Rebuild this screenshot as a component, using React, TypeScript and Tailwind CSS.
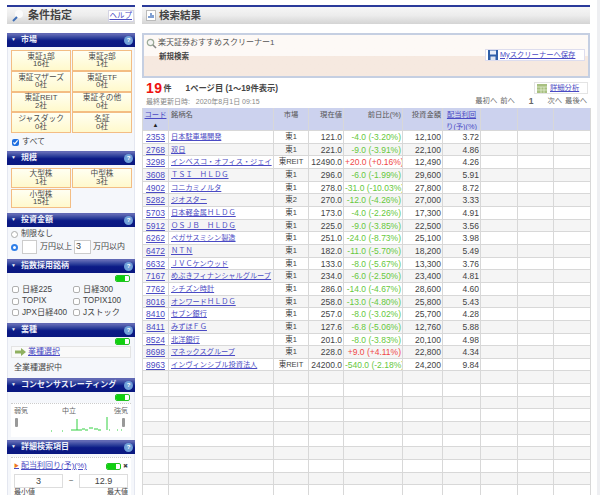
import React from "react";

const FONT = "font-['Liberation_Sans','Noto_Sans_CJK_JP',sans-serif]";

const rows: [string, string, string, string, string, string, string][] = [
  ["2353", "日本駐車場開発", "東1", "121.0", "-4.0 (-3.20%)", "12,100", "3.72"],
  ["2768", "双日", "東1", "221.0", "-9.0 (-3.91%)", "22,100", "4.86"],
  ["3298", "インベスコ・オフィス・ジェイ", "東REIT", "12490.0", "+20.0 (+0.16%)", "12,490", "4.26"],
  ["3608", "ＴＳＩ　ＨＬＤＧ", "東1", "296.0", "-6.0 (-1.99%)", "29,600", "5.91"],
  ["4902", "コニカミノルタ", "東1", "278.0", "-31.0 (-10.03%)", "27,800", "8.72"],
  ["5282", "ジオスター", "東2", "270.0", "-12.0 (-4.26%)", "27,000", "3.33"],
  ["5703", "日本軽金属ＨＬＤＧ", "東1", "173.0", "-4.0 (-2.26%)", "17,300", "4.91"],
  ["5912", "ＯＳＪＢ　ＨＬＤＧ", "東1", "225.0", "-9.0 (-3.85%)", "22,500", "3.56"],
  ["6262", "ペガサスミシン製造", "東1", "251.0", "-24.0 (-8.73%)", "25,100", "3.98"],
  ["6472", "ＮＴＮ", "東1", "182.0", "-11.0 (-5.70%)", "18,200", "5.49"],
  ["6632", "ＪＶＣケンウッド", "東1", "133.0", "-8.0 (-5.67%)", "13,300", "3.76"],
  ["7167", "めぶきフィナンシャルグループ", "東1", "234.0", "-6.0 (-2.50%)", "23,400", "4.81"],
  ["7762", "シチズン時計", "東1", "286.0", "-14.0 (-4.67%)", "28,600", "4.60"],
  ["8016", "オンワードＨＬＤＧ", "東1", "258.0", "-13.0 (-4.80%)", "25,800", "5.43"],
  ["8410", "セブン銀行", "東1", "257.0", "-8.0 (-3.02%)", "25,700", "4.28"],
  ["8411", "みずほＦＧ", "東1", "127.6", "-6.8 (-5.06%)", "12,760", "5.88"],
  ["8524", "北洋銀行", "東1", "201.0", "-8.0 (-3.83%)", "20,100", "4.98"],
  ["8698", "マネックスグループ", "東1", "228.0", "+9.0 (+4.11%)", "22,800", "4.34"],
  ["8963", "インヴィンシブル投資法人", "東REIT", "24200.0", "-540.0 (-2.18%)", "24,200", "9.84"],
];

const COLS = "grid grid-cols-[26px_105px_35px_35px_59px_40px_38px_37px_36px_37px]";
const CELL = "border-r border-b border-[#d8d8d8] px-[1px] overflow-hidden leading-[12px]";
const LINK = "text-[#4a4ac4]";

function Toggle() {
  return (
    <span className="flex h-[7px] w-[15px] overflow-hidden rounded-[2px] border border-[#22c322] bg-white">
      <span className="w-[9px] bg-[#10d010]" />
    </span>
  );
}

function Header({ title }: { title: string }) {
  return (
    <div className="flex h-[14px] items-center justify-between bg-gradient-to-b from-[#6068b4] from-[10%] via-[#0c1a86] via-[55%] to-[#0a1880] pl-[4px] pr-[2px] text-[8px] font-bold text-[#eef0fa]">
      <span className="flex items-center whitespace-nowrap">
        <span className="w-[10px] text-[5px]">▼</span>
        <span>{title}</span>
      </span>
      <span className="flex h-[9px] w-[9px] items-center justify-center rounded-full bg-[#6f9fd8] text-[6px] text-white">?</span>
    </div>
  );
}

function StockBtn({ a, b, small }: { a: string; b: string; small?: boolean }) {
  return (
    <div className={`flex ${small ? "h-[19.5px]" : "h-[20.75px]"} flex-col items-center justify-center border-[1.5px] border-[#f3bd84] bg-gradient-to-b from-[#fffff2] to-[#fff9cc] text-center text-[7.7px] leading-[7.5px] text-[#4a4a4a]`}>
      <span>{a}</span>
      <span>{b}</span>
    </div>
  );
}

function Check({ label }: { label: string }) {
  return (
    <div className="flex h-[11.5px] items-center gap-[3px] whitespace-nowrap">
      <span className="h-[7px] w-[7px] rounded-[2px] border border-[#b0b0b0] bg-white" />
      <span>{label}</span>
    </div>
  );
}

function Sidebar() {
  return (
    <div className="w-[128px] shrink-0 text-[8px] text-[#444]">
      <div className="flex h-[19px] items-center justify-between border-t-2 border-[#2a3a9a] bg-gradient-to-b from-[#f6f6f6] via-[#ececec] to-[#d4d4d4] pl-[4px] pr-[1px]">
        <div className="flex items-center gap-[3px]">
          <svg width="14" height="14" viewBox="0 0 14 14">
            <circle cx="8" cy="5" r="4" fill="#fbfbfb" />
            <path d="M2 12 L6 8" stroke="#3d6db5" strokeWidth="2" />
          </svg>
          <span className="text-[11px] font-bold text-[#444]">条件指定</span>
        </div>
        <span className="border border-[#d4d4e4] bg-white px-[1px] text-[7.5px] leading-[10px] text-[#4a4ac4] underline">ヘルプ</span>
      </div>

      <div className="mt-[9px] bg-[#f5f7fb]">
        <Header title="市場" />
        <div className="border-x border-[#e4e7f0] px-[3px] pt-[3px]">
          <div className="grid grid-cols-[60px_60px] gap-x-[1px] gap-y-0">
            <StockBtn a="東証1部" b="16社" />
            <StockBtn a="東証2部" b="1社" />
            <StockBtn a="東証マザーズ" b="0社" />
            <StockBtn a="東証ETF" b="0社" />
            <StockBtn a="東証REIT" b="2社" />
            <StockBtn a="東証その他" b="0社" />
            <StockBtn a="ジャスダック" b="0社" />
            <StockBtn a="名証" b="0社" />
          </div>
          <div className="flex h-[18px] items-center gap-[3px] pl-[1px]">
            <input type="checkbox" defaultChecked className="h-[7px] w-[7px] accent-[#1f6fe0]" />
            <span>すべて</span>
          </div>
        </div>

        <Header title="規模" />
        <div className="border-x border-[#e4e7f0] px-[3px] pb-[5px] pt-[3px]">
          <div className="grid grid-cols-[60px_60px] gap-x-[1px] gap-y-[1px]">
            <StockBtn small a="大型株" b="1社" />
            <StockBtn small a="中型株" b="3社" />
            <StockBtn small a="小型株" b="15社" />
          </div>
        </div>

        <Header title="投資金額" />
        <div className="flex h-[32px] flex-col gap-[1px] border-x border-[#e4e7f0] px-[3px] pt-[2px]">
          <div className="flex h-[10px] items-center gap-[3px]">
            <span className="h-[7px] w-[7px] rounded-full border border-[#aaa] bg-white" />
            <span>制限なし</span>
          </div>
          <div className="flex items-center whitespace-nowrap">
            <span className="h-[7px] w-[7px] rounded-full border-[2px] border-[#2f7fe8] bg-white" />
            <span className="ml-[4px] h-[14px] w-[15px] border border-[#ccc] bg-white" />
            <span className="ml-[3px] w-[34px]">万円以上</span>
            <span className="flex h-[14px] w-[17px] items-center border border-[#ccc] bg-white pl-[1px] text-[9px]">3</span>
            <span className="ml-[2px]">万円以内</span>
          </div>
        </div>

        <Header title="指数採用銘柄" />
        <div className="h-[50px] border-x border-[#e4e7f0] pl-[3px] pr-[3px] pt-[2px]">
          <div className="flex justify-end pr-[1px]"><Toggle /></div>
          <div className="mt-[2px] grid grid-cols-[61px_1fr] pl-[1px] text-[8.2px]">
            <Check label="日経225" />
            <Check label="日経300" />
            <Check label="TOPIX" />
            <Check label="TOPIX100" />
            <Check label="JPX日経400" />
            <Check label="Jストック" />
          </div>
        </div>

        <Header title="業種" />
        <div className="border-x border-[#e4e7f0] px-[3px] pt-[1px]">
          <div className="flex justify-end pr-[1px]"><Toggle /></div>
          <div className="mt-[1px] flex h-[12px] items-center gap-[2px] border border-[#e4e4e4] bg-[#fafafa] pl-[3px]">
            <svg width="11" height="8" viewBox="0 0 11 8">
              <path d="M0 2.5 H6 V0 L11 4 L6 8 V5.5 H0 Z" fill="#8fb060" />
            </svg>
            <span className={`${LINK} underline`}>業種選択</span>
          </div>
          <div className="flex h-[20px] items-center pl-[3px]">全業種選択中</div>
        </div>

        <Header title="コンセンサスレーティング" />
        <div className="border-x border-[#e4e7f0] px-[3px] pb-[3px] pt-[2px]">
          <div className="flex justify-end pr-[1px]"><Toggle /></div>
          <div className="mt-[2px] h-[34px] border-t border-dotted border-[#ccc] bg-white px-[3px] text-[7px] text-[#666]">
            <div className="flex justify-between pt-[1px] leading-[11px]">
              <span>弱気</span><span className="mr-[4px]">中立</span><span>強気</span>
            </div>
            <svg width="114" height="20" viewBox="0 0 114 20" className="block">
              <rect x="1" y="2" width="3" height="9" rx="1" fill="#999" />
              <rect x="108" y="2" width="3" height="9" rx="1" fill="#999" />
              <path d="M37 15h1M48 15h1M57 14h6M63 3v11M63 14h5M68 13h3M71 14h3M75 12h4M80 13h4M84 14h3M95 14h1M103 14h1M107 14h1" stroke="#33d040" strokeWidth="1" fill="none" />
              <path d="M93 1v13" stroke="#33d040" strokeWidth="1" />
            </svg>
          </div>
        </div>

        <Header title="詳細検索項目" />
        <div className="border-x border-[#e4e7f0] px-[3px] pt-[3px]">
          <div className="border-t border-dotted border-[#ccc] bg-white px-[3px] pt-[2px]">
            <div className="flex h-[12px] items-center justify-between">
              <span className={`flex items-center gap-[2px] ${LINK} underline`}>
                <span className="text-[5px] text-[#ee7722]">▶</span>配当利回り(予)(%)
              </span>
              <span className="flex items-center gap-[2px]"><Toggle /><span className="text-[6px]">✖</span></span>
            </div>
            <div className="mt-[2px] flex items-center justify-between">
              <span className="h-[14px] w-[49px] border border-[#ddd] text-center text-[9px] leading-[12px]">3</span>
              <span>~</span>
              <span className="h-[14px] w-[49px] border border-[#ddd] text-center text-[9px] leading-[12px]">12.9</span>
            </div>
            <div className="flex justify-between text-[7px] leading-[8px]">
              <span>最小値</span><span>最大値</span>
            </div>
          </div>
        </div>
      </div>
    </div>
  );
}

function Main() {
  return (
    <div className="w-[448px] shrink-0 text-[8.5px] text-[#444]">
      <div className="flex h-[19px] items-center gap-[3px] border-t-2 border-[#2a3a9a] bg-gradient-to-b from-[#f6f6f6] via-[#ececec] to-[#d4d4d4] pl-[4px]">
        <svg width="10" height="11" viewBox="0 0 10 11">
          <rect x="0.5" y="0.5" width="9" height="10" fill="#fff" stroke="#bbb" />
          <path d="M3 8V6M5 8V3M7 8V5" stroke="#4a78c0" strokeWidth="1.4" />
        </svg>
        <span className="text-[10.5px] font-bold">検索結果</span>
      </div>

      <div className="mt-[9px] h-[45px] border-2 border-[#c5cfe2] bg-gradient-to-b from-[#fdf9f6] from-[50%] to-[#f6e9e0] to-[50%]">
        <div className="flex h-[16px] items-center gap-[1px] pl-[2px] text-[8px] text-[#555]">
          <svg width="11" height="11" viewBox="0 0 11 11">
            <circle cx="4.5" cy="4.5" r="3.2" fill="#f5f5f5" stroke="#9aaa98" strokeWidth="1.2" />
            <path d="M7 7L10 10" stroke="#888" strokeWidth="1.6" />
          </svg>
          <span>楽天証券おすすめスクリーナー1</span>
        </div>
        <div className="flex items-start justify-between">
          <span className="pl-[15px] text-[7.5px] font-bold leading-[12px]">新規検索</span>
          <span className={`-mt-[2px] mr-[3px] flex h-[12px] w-[100px] items-center gap-[2px] whitespace-nowrap border border-[#dde] bg-white pl-[2px] text-[7.3px] ${LINK} underline`}>
            <svg width="10" height="10" viewBox="0 0 10 10" className="shrink-0">
              <rect width="10" height="10" fill="#2f5fa8" />
              <rect x="2" y="0.5" width="6" height="4" fill="#e8eef8" />
              <rect x="2.5" y="6.5" width="5" height="3.5" fill="#dfe6f0" />
            </svg>
            Myスクリーナーへ保存
          </span>
        </div>
      </div>

      <div className="mt-[1px] flex h-[29px] items-start justify-between">
        <div className="pl-[4px]">
          <div className="flex h-[17px] items-center">
            <span className="text-[14px] font-bold leading-[14px] tracking-[0.5px] text-[#ee1111]">19</span>
            <span className="ml-[1px] mt-[3px] text-[8px] font-bold">件</span>
            <span className="ml-[14px] mt-[2px] text-[8.3px] font-bold">1ページ目 (1～19件表示)</span>
          </div>
          <div className="mt-[1px] text-[7px] leading-[9px] text-[#888]">最終更新日時:&nbsp;&nbsp;&nbsp;2020年8月1日 09:15</div>
        </div>
        <div className="flex flex-col items-end">
          <span className={`mr-[2px] mt-[3px] flex h-[12px] w-[54px] items-center gap-[3px] border border-[#e4e4e4] pl-[2px] text-[7.3px] ${LINK} underline`}>
            <svg width="10" height="9" viewBox="0 0 10 9" className="shrink-0">
              <rect width="10" height="9" fill="#a8c080" />
              <path d="M0 3H10M0 6H10M4 3V9M7 3V9" stroke="#e8f0d8" strokeWidth="0.7" />
            </svg>
            詳細分析
          </span>
          <div className="mr-[3px] mt-[2px] flex text-[7.3px] leading-[10px] text-[#666]">
            <span>最初へ</span><span className="ml-[3px]">前へ</span>
            <span className="ml-[14px] mr-[14px] text-[8.5px] font-bold">1</span>
            <span>次へ</span><span className="ml-[3px]">最後へ</span>
          </div>
        </div>
      </div>

      <div className="border-l border-[#d8d8d8]">
        <div className={`${COLS} h-[23px] bg-[#ccd2ee] text-[7.3px] leading-[10px] text-[#555]`}>
          <div className={`${CELL} pt-[1px] text-center ${LINK}`}><div className="underline">コード</div><div className="text-[6px] leading-[9px] text-[#222]">▲</div></div>
          <div className={`${CELL} pl-[2px] pt-[1px]`}>銘柄名</div>
          <div className={`${CELL} pt-[1px] text-center`}>市場</div>
          <div className={`${CELL} pt-[1px] text-right`}>現在値</div>
          <div className={`${CELL} pt-[1px] text-right`}>前日比(%)</div>
          <div className={`${CELL} pt-[1px] text-right`}>投資金額</div>
          <div className={`${CELL} pt-[1px] text-center ${LINK} underline`}>配当利回<br />り(予)(%)</div>
          <div className={CELL} /><div className={CELL} /><div className={CELL} />
        </div>
        {Array.from({ length: 29 }).map((_, i) => {
          const r = rows[i];
          const bg = i % 2 ? "bg-[#f5f5f5]" : "bg-white";
          const c = r && r[4].startsWith("+") ? "text-[#f04848]" : "text-[#66c83c]";
          return (
            <div key={i} className={`${COLS} h-[12.66px] ${bg}`}>
              <div className={`${CELL} text-center ${LINK} underline`}>{r?.[0]}</div>
              <div className={`${CELL} whitespace-nowrap pl-[2px] text-[7.2px] ${LINK} underline`}>{r?.[1]}</div>
              <div className={`${CELL} whitespace-nowrap text-center text-[7.5px]`}>{r?.[2]}</div>
              <div className={`${CELL} text-right`}>{r?.[3]}</div>
              <div className={`${CELL} whitespace-nowrap text-right ${c}`}>{r?.[4]}</div>
              <div className={`${CELL} text-right`}>{r?.[5]}</div>
              <div className={`${CELL} text-right`}>{r?.[6]}</div>
              <div className={CELL} /><div className={CELL} /><div className={CELL} />
            </div>
          );
        })}
      </div>
    </div>
  );
}

export default function App() {
  return (
    <div className={`${FONT} flex h-[495px] w-[600px] gap-[7px] overflow-hidden bg-white pl-[7px] pt-[5px]`}>
      <Sidebar />
      <Main />
      <div className="-mt-[5px] ml-auto h-[495px] w-[3px] bg-[#eeeff2]" />
    </div>
  );
}
